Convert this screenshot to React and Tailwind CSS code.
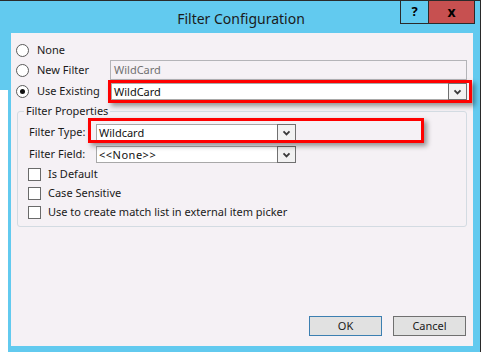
import React from "react";

const Chevron = () => (
  <svg width="9" height="6" viewBox="0 0 9 6">
    <path d="M1.5 1.3 L4.5 4.4 L7.5 1.3" stroke="#3a3a3a" strokeWidth="1.8" fill="none" />
  </svg>
);

function Combo({ text, className }) {
  return (
    <div className={"flex items-center bg-white border border-[#a8a8a8] " + className}>
      <span className="flex-1 pl-[2px] leading-none text-[#111]">{text}</span>
      <div className="self-stretch w-[19px] -my-px -mr-px border border-[#707070] bg-[#f2f2f2] flex items-center justify-center">
        <Chevron />
      </div>
    </div>
  );
}

function Radio({ checked }) {
  return (
    <div className="w-[13px] h-[13px] rounded-full border border-[#5a5a5a] bg-white flex items-center justify-center">
      {checked && <div className="w-[5px] h-[5px] rounded-full bg-[#111]" />}
    </div>
  );
}

function Check({ label }) {
  return (
    <div className="h-[19px] flex items-center">
      <div className="w-[13px] h-[13px] border border-[#6a6a6a] bg-white" />
      <span className="ml-[7px]">{label}</span>
    </div>
  );
}

export default function App() {
  return (
    <div className="w-[487px] h-[359px] bg-white flex flex-col font-['Noto_Sans',sans-serif] text-[11px] text-[#1a1a1a]">
      {/* title bar */}
      <div className="w-[481px] h-[33px] flex border-t border-r border-[#2a2a2a] bg-[#62caef] shrink-0">
        <div className="flex-1 flex items-center justify-center pl-[82px] pt-[2px] text-[14px] text-[#1b1b1b]">
          Filter Configuration
        </div>
        <div className="w-[28px] h-[23px] border-l border-b border-[#2a2a2a] flex items-center justify-center font-bold text-[13px] text-black">
          ?
        </div>
        <div className="w-[47px] h-[23px] border-l border-r border-b border-[#2a2a2a] bg-[#c75050] flex items-center justify-center font-bold text-[14px] text-black leading-none">
          x
        </div>
        <div className="w-[5px]" />
      </div>

      {/* body */}
      <div className="w-[481px] h-[319px] flex border-r border-[#2a2a2a] shrink-0">
        <div className="w-[8px] flex flex-col">
          <div className="h-[57px] bg-[#62caef]" />
          <div className="flex-1 bg-white" />
        </div>
        <div className="flex-1 bg-[#62caef] pl-[3px] pr-[7px] pb-[6px] flex">
          <div className="flex-1 bg-[#f5f1f5] flex flex-col pt-[8px] pl-[5px]">
            {/* None */}
            <div className="h-[18px] flex items-center">
              <Radio />
              <span className="ml-[8px]">None</span>
            </div>
            {/* New Filter */}
            <div className="mt-[1px] h-[20px] flex items-center">
              <div className="w-[92px] flex items-center">
                <Radio />
                <span className="ml-[8px]">New Filter</span>
              </div>
              <div className="ml-[2px] w-[357px] h-[20px] border border-[#b4b4b8] flex items-center pl-[3px] text-[#707070]">
                WildCard
              </div>
            </div>
            {/* Use Existing */}
            <div className="h-[23px] flex items-center">
              <div className="w-[92px] flex items-center">
                <Radio checked />
                <span className="ml-[8px]">Use Existing</span>
              </div>
              <div className="w-[364px] h-[23px] border-[3px] border-[#ff0000] shadow-[3px_3px_5px_rgba(0,0,0,0.4)] flex pr-[2px]">
                <Combo text="WildCard" className="flex-1 h-full" />
              </div>
            </div>

            {/* Filter Properties */}
            <fieldset className="mt-[1px] ml-[1px] w-[450px] h-[123px] border border-[#d3dbe2] rounded-[3px]">
              <legend className="ml-[6px] px-[2px] h-[14px] leading-[14px]">Filter Properties</legend>
              <div className="pt-[6px] pl-[11px] flex flex-col">
                <div className="h-[17px] flex items-center">
                  <span className="w-[67px]">Filter Type:</span>
                  <div className="relative w-[200px] h-[17px]">
                    <Combo text="Wildcard" className="w-[200px] h-[17px]" />
                    <div className="absolute left-[-8px] top-[-6px] w-[336px] h-[25px] border-[3px] border-[#ff0000] shadow-[3px_3px_5px_rgba(0,0,0,0.4)]" />
                  </div>
                </div>
                <div className="mt-[5px] h-[17px] flex items-center">
                  <span className="w-[67px]">Filter Field:</span>
                  <Combo text="<<None>>" className="w-[200px] h-[17px] tracking-[0.5px]" />
                </div>
                <div className="mt-[2px] flex flex-col -ml-[1px]">
                  <Check label="Is Default" />
                  <Check label="Case Sensitive" />
                  <Check label="Use to create match list in external item picker" />
                </div>
              </div>
            </fieldset>

            {/* buttons */}
            <div className="mt-auto flex justify-end gap-[11px] pr-[7px] pb-[10px]">
              <div className="w-[73px] h-[20px] border border-[#3c7fb1] bg-[#e1e1e1] flex items-center justify-center">
                OK
              </div>
              <div className="w-[73px] h-[20px] border border-[#707070] bg-[#e1e1e1] flex items-center justify-center">
                Cancel
              </div>
            </div>
          </div>
        </div>
      </div>
      <div className="flex-1 bg-white" />
    </div>
  );
}
